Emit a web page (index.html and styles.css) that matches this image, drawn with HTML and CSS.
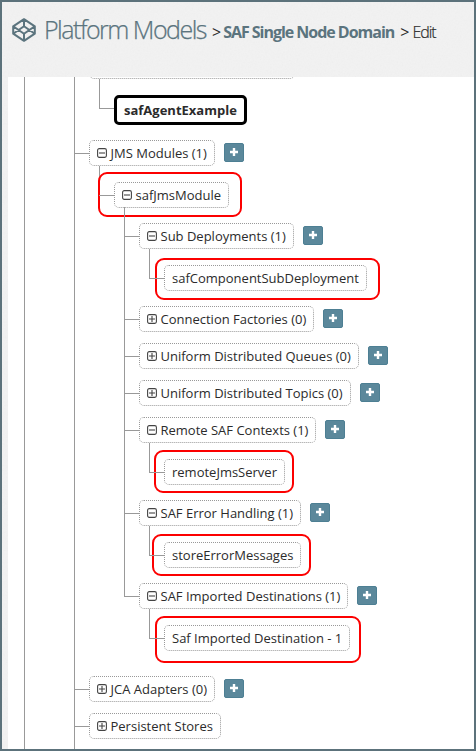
FILE: index.html
```html
<!DOCTYPE html>
<html lang="en">
<head>
<meta charset="utf-8">
<title>Platform Models</title>
<link rel="stylesheet" href="styles.css">
</head>
<body>
<svg class="defs" width="0" height="0" aria-hidden="true">
  <symbol id="minus" viewBox="0 0 10 10"><rect x=".6" y=".6" width="8.8" height="8.8" rx="1.6"/><path d="M2 5h6"/></symbol>
  <symbol id="plus" viewBox="0 0 10 10"><rect x=".6" y=".6" width="8.8" height="8.8" rx="1.6"/><path d="M2 5h6M5 2v6"/></symbol>
  <symbol id="add" viewBox="0 0 20 19"><path d="M10 5v8M6 9h8"/></symbol>
</svg>
<div class="frame">
  <svg class="grain" aria-hidden="true"><filter id="noise"><feTurbulence type="fractalNoise" baseFrequency=".6" numOctaves="2"/><feColorMatrix type="saturate" values="0"/></filter><rect width="100%" height="100%" filter="url(#noise)"/></svg>
  <header class="header">
    <svg class="logo" viewBox="0 0 24 24"><path d="M12 1.2 22.8 8.3v7.4L12 22.8 1.2 15.7V8.3ZM12 1.2v7M12 15.8v7M1.2 8.3 12 15.8l10.8-7.5M1.2 15.7 12 8.2l10.8 7.5"/></svg>
    <h1 class="title">Platform Models</h1>
    <span class="sep">&gt;</span>
    <a class="domain">SAF Single Node Domain</a>
    <span class="sep second">&gt;</span>
    <span class="page">Edit</span>
  </header>
  <main class="tree">
    <ul class="level root">
      <li class="item clipped">
        <div class="row"><span class="node cut"></span></div>
        <ul class="level">
          <li class="item"><div class="row"><span class="node current">safAgentExample</span></div></li>
        </ul>
      </li>
      <li class="item">
        <div class="row"><span class="node"><svg class="toggle"><use href="#minus"/></svg>JMS Modules (1)</span><button class="add"><svg><use href="#add"/></svg></button></div>
        <ul class="level modules">
          <li class="item">
            <div class="row"><span class="node"><svg class="toggle"><use href="#minus"/></svg>safJmsModule<i class="mark mark-module"></i></span></div>
            <ul class="level groups">
              <li class="item">
                <div class="row"><span class="node"><svg class="toggle"><use href="#minus"/></svg>Sub Deployments (1)</span><button class="add"><svg><use href="#add"/></svg></button></div>
                <ul class="level"><li class="item"><div class="row"><span class="node">safComponentSubDeployment<i class="mark mark-sub"></i></span></div></li></ul>
              </li>
              <li class="item"><div class="row"><span class="node"><svg class="toggle"><use href="#plus"/></svg>Connection Factories (0)</span><button class="add"><svg><use href="#add"/></svg></button></div></li>
              <li class="item"><div class="row"><span class="node"><svg class="toggle"><use href="#plus"/></svg>Uniform Distributed Queues (0)</span><button class="add"><svg><use href="#add"/></svg></button></div></li>
              <li class="item"><div class="row"><span class="node"><svg class="toggle"><use href="#plus"/></svg>Uniform Distributed Topics (0)</span><button class="add"><svg><use href="#add"/></svg></button></div></li>
              <li class="item">
                <div class="row"><span class="node"><svg class="toggle"><use href="#minus"/></svg>Remote SAF Contexts (1)</span><button class="add"><svg><use href="#add"/></svg></button></div>
                <ul class="level"><li class="item"><div class="row"><span class="node">remoteJmsServer<i class="mark mark-remote"></i></span></div></li></ul>
              </li>
              <li class="item">
                <div class="row"><span class="node"><svg class="toggle"><use href="#minus"/></svg>SAF Error Handling (1)</span><button class="add"><svg><use href="#add"/></svg></button></div>
                <ul class="level"><li class="item"><div class="row"><span class="node">storeErrorMessages<i class="mark mark-store"></i></span></div></li></ul>
              </li>
              <li class="item">
                <div class="row"><span class="node"><svg class="toggle"><use href="#minus"/></svg>SAF Imported Destinations (1)</span><button class="add"><svg><use href="#add"/></svg></button></div>
                <ul class="level"><li class="item"><div class="row"><span class="node">Saf Imported Destination - 1<i class="mark mark-dest"></i></span></div></li></ul>
              </li>
            </ul>
          </li>
        </ul>
      </li>
      <li class="item"><div class="row"><span class="node"><svg class="toggle"><use href="#plus"/></svg>JCA Adapters (0)</span><button class="add"><svg><use href="#add"/></svg></button></div></li>
      <li class="item"><div class="row"><span class="node"><svg class="toggle"><use href="#plus"/></svg>Persistent Stores</span></div></li>
    </ul>
  </main>
</div>
</body>
</html>
```
FILE: styles.css
```css
* { box-sizing: border-box; }
body { margin: 0; font-family: "Open Sans", sans-serif; color: #2b2b2b; }
.defs { position: absolute; }
.frame {
  position: relative;
  height: 751px;
  border: 2px solid #5c727b;
  background: #f2f2f2;
  overflow: hidden;
  display: flex;
  flex-direction: column;
}
.grain { position: absolute; inset: 0; width: 100%; height: 100%; opacity: .05; }
.header {
  position: relative;
  flex: 0 0 75px;
  display: flex;
  align-items: flex-start;
  padding: 10px 0 0 10px;
  line-height: 34px;
  white-space: nowrap;
}
.logo { width: 24px; height: 24px; margin-top: 6px; fill: none; stroke: #5b747e; stroke-width: 2; stroke-linejoin: round; }
.title { margin: 0 0 0 8px; font-size: 25px; line-height: 34px; font-weight: 300; letter-spacing: -1.5px; color: #5b747e; -webkit-text-stroke: .25px #5b747e; }
.sep, .domain, .page { padding-top: 3px; line-height: 34px; }
.sep { margin-left: 6px; font-size: 16px; font-weight: 400; }
.domain { margin-left: 2px; font-size: 16px; font-weight: 700; letter-spacing: -1.03px; color: #5b747e; }
.second { margin-left: 6px; }
.page { margin-left: 3px; font-size: 16px; font-weight: 300; letter-spacing: -1px; -webkit-text-stroke: .2px #2b2b2b; }

.tree { position: relative; flex: 1; min-height: 0; margin-left: 6px; padding-left: 16px; background: #fff; overflow: hidden; }
.level { list-style: none; margin: 0; padding: 5px 0 4px 10px; }
.root { height: 100%; padding: 0 0 0 49px; border-left: 1px solid #999; }
.modules { padding-bottom: 5px; }
.groups { padding-top: 4px; padding-bottom: 5px; }
.item { position: relative; padding: 11px 0 0 15px; }
.item::before { content: ""; position: absolute; left: 0; top: -5px; bottom: 0; border-left: 1px solid #999; }
.item:last-child::before { bottom: auto; height: 30px; }
.root > .item:last-child::before { height: 60px; }
.item::after { content: ""; position: absolute; left: 0; top: 24px; width: 15px; border-top: 1px solid #999; }
.row { display: flex; align-items: flex-start; gap: 9px; height: 26px; }
.node {
  position: relative;
  height: 26px;
  display: flex;
  align-items: center;
  padding: 0 7px;
  border: 1px dotted #999;
  border-radius: 5px;
  background: #fff;
  font-size: 13px;
  line-height: 24px;
  white-space: nowrap;
}
.toggle { width: 10px; height: 10px; margin-right: 3.5px; fill: none; stroke: #444; stroke-width: 1.1; }
.add { width: 20px; height: 19px; margin: 3px 0 0; padding: 0; border: 1px solid #4d7f93; border-radius: 2px; background: #5b889b; }
.add svg { display: block; width: 20px; height: 19px; margin: -1px; fill: none; stroke: #fff; stroke-width: 2.4; }
.clipped { padding-top: 0; }
.clipped::after { display: none; }
.clipped > .row { height: 2px; }
.cut { width: 206px; height: 26px; margin-top: -24px; }
.clipped .item { padding-top: 11px; }
.clipped .row .current { height: 30px; border: 3px solid #000; border-radius: 5px; font-weight: 700; }
.clipped .level .row { height: 30px; }
.mark { position: absolute; border: 2px solid #fc0000; border-radius: 9px; }
.mark-module { inset: -11px -14px -10px -17px; }
.mark-sub { inset: -8px -14px -10px -10px; }
.mark-remote { inset: -10px -10px -9px -11px; }
.mark-store { inset: -9px -11px -9px -13px; }
.mark-dest { inset: -10px -12px -13px -10px; }
```
